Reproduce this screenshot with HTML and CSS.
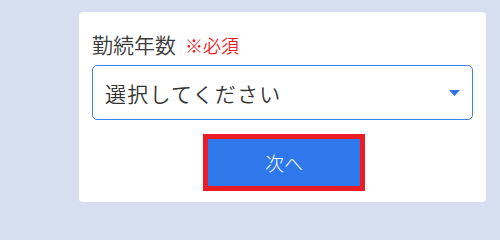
FILE: index.html
```html
<!DOCTYPE html>
<html lang="ja">
<head>
<meta charset="utf-8">
<link rel="stylesheet" href="styles.css">
</head>
<body>
<div class="card">
  <div class="label">勤続年数<span class="req">※必須</span></div>
  <div class="select">
    <span class="placeholder">選択してください</span>
    <svg class="caret" width="11" height="6" viewBox="0 0 11 6"><path d="M0 0H11L5.5 6Z" fill="#2f74e4"/></svg>
  </div>
  <div class="actions">
    <button class="next">次へ</button>
  </div>
</div>
</body>
</html>
```

FILE: styles.css
```css
html, body {
  margin: 0;
  padding: 0;
  background: #d6dff0;
}
body {
  padding: 12px 14px 14px 79px;
  font-family: "Noto Sans CJK JP", "Noto Sans", sans-serif;
}
.card {
  width: 407px;
  box-sizing: border-box;
  background: #fff;
  border-radius: 4px;
  padding: 19px 13px 11px 13px;
  display: flex;
  flex-direction: column;
}
.label {
  font-size: 21px;
  line-height: 26px;
  font-weight: 350;
  color: #3a3a3a;
  margin-bottom: 7px;
}
.req {
  font-size: 18px;
  color: #ec1f28;
  margin-left: 9px;
}
.select {
  height: 55px;
  box-sizing: border-box;
  border: 1.5px solid #3f82ec;
  border-radius: 5px;
  display: flex;
  align-items: center;
  justify-content: space-between;
  padding: 0 12px 0 12px;
}
.placeholder {
  font-size: 21px;
  font-weight: 350;
  color: #333;
  letter-spacing: 1.2px;
}
.caret {
  display: block;
}
.actions {
  display: flex;
  justify-content: center;
  margin-top: 14px;
}
.next {
  width: 162px;
  height: 57px;
  box-sizing: border-box;
  border: 5px solid #ec1c24;
  background: #2e78ec;
  color: #fff;
  font-family: "Noto Sans CJK JP", sans-serif;
  font-size: 19px;
  font-weight: 300;
  padding: 0;
  margin-left: 3px;
}
```
